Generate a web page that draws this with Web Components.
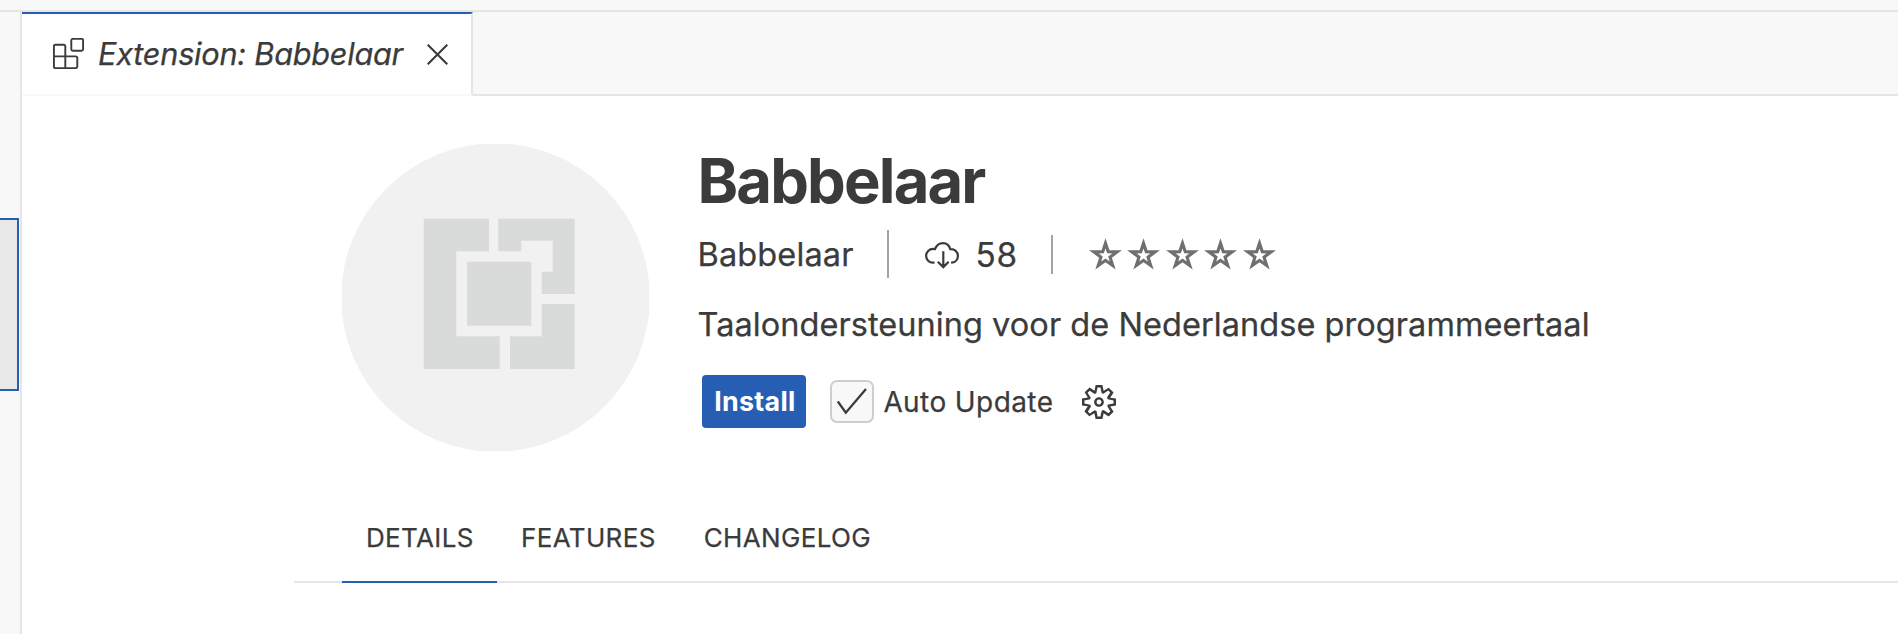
<!DOCTYPE html>
<html lang="en">
<head>
<meta charset="utf-8">
<title>Extension: Babbelaar</title>
<style>
  html, body { margin: 0; height: 100%; overflow: hidden; }
  body {
    font-family: Inter, "Liberation Sans", sans-serif;
    font-weight: 400;
    color: #3b3b3b;
    background: #fff;
    -webkit-text-stroke: .25px currentColor;
    --accent: #265eb4;
    --line: #e5e5e5;
    --panel: #f8f8f8;
  }
</style>
</head>
<body>
<ext-workbench>
  <ext-sidebar slot="side"></ext-sidebar>
  <ext-tabbar slot="bar" label="Extension: Babbelaar"></ext-tabbar>
  <ext-header>
    <ext-logo slot="logo"></ext-logo>
    <span slot="name">Babbelaar</span>
    <ext-meta slot="meta" publisher="Babbelaar" installs="58"></ext-meta>
    <span slot="description">Taalondersteuning voor de Nederlandse programmeertaal</span>
    <ext-actions slot="actions"></ext-actions>
  </ext-header>
  <ext-nav>
    <ext-nav-item active>DETAILS</ext-nav-item>
    <ext-nav-item>FEATURES</ext-nav-item>
    <ext-nav-item>CHANGELOG</ext-nav-item>
  </ext-nav>
</ext-workbench>
<script>
function define(name, html) {
  customElements.define(name, class extends HTMLElement {
    connectedCallback() {
      if (this.shadowRoot) return;
      const root = this.attachShadow({ mode: 'open' });
      root.innerHTML = html;
      root.querySelectorAll('[data-attr]').forEach(el => {
        el.textContent = this.getAttribute(el.dataset.attr) || '';
      });
    }
  });
}

customElements.define('ext-star', class extends HTMLElement {
  connectedCallback() {
    if (this.shadowRoot) return;
    const ring = (R, r) => Array.from({ length: 10 }, (_, i) => {
      const a = Math.PI * (i / 5 - .5), q = i % 2 ? r : R;
      return (16.5 + q * Math.cos(a)).toFixed(2) + ' ' + (17.6 + q * Math.sin(a)).toFixed(2);
    }).join('L');
    this.attachShadow({ mode: 'open' }).innerHTML = `
      <style>:host { display: block; width: 33px; height: 33px; } svg { display: block; }</style>
      <svg width="33" height="33" viewBox="0 0 33 33"><path fill="#6f6f6f" fill-rule="evenodd" d="M${ring(17.3, 6.7)}ZM${ring(7.2, 2.9)}Z"/></svg>`;
  }
});

define('ext-workbench', `
  <style>
    :host { display: grid; grid-template-rows: 10px 1fr; height: 634px; background: var(--panel); }
    .body { display: grid; grid-template-columns: 20px 1fr; border-top: 2px solid var(--line); min-height: 0; }
    main { display: flex; flex-direction: column; background: #fff; border-left: 2px solid var(--line); min-width: 0; }
  </style>
  <div class="title"></div>
  <div class="body">
    <slot name="side"></slot>
    <main><slot name="bar"></slot><slot></slot></main>
  </div>`);

define('ext-sidebar', `
  <style>
    :host { display: block; background: var(--panel); padding-top: 206px; }
    div { box-sizing: border-box; width: 19px; height: 173px; background: #e8e8e8; border: 2px solid var(--accent); border-left: 0; }
  </style>
  <div></div>`);

define('ext-tabbar', `
  <style>
    :host { display: flex; height: 84px; }
    .tab { box-sizing: border-box; display: flex; align-items: center; width: 451px; height: 84px; padding: 0 23px 0 31px;
      background: #fff; border-top: 2px solid var(--accent); border-bottom: 2px solid #f9f9f9; border-right: 2px solid var(--line); }
    .label { flex: 1; margin-left: 14px; font-size: 30.7px; font-style: italic; line-height: 40px; letter-spacing: -.25px; white-space: nowrap; }
    .rest { flex: 1; box-sizing: border-box; background: var(--panel); border-bottom: 2px solid var(--line); }
    svg { fill: none; stroke: currentColor; display: block; }
  </style>
  <div class="tab">
    <svg width="31" height="31" viewBox="0 0 31 31" stroke-width="1.9" style="margin-top:-1px">
      <path d="M12.3 18.4V8.2a1.5 1.5 0 0 0-1.5-1.5H2.4A1.5 1.5 0 0 0 .9 8.2v20.4a1.5 1.5 0 0 0 1.5 1.5h20.4a1.5 1.5 0 0 0 1.5-1.5V19.9a1.5 1.5 0 0 0-1.5-1.5H.9M12.3 18.4V30.1"/>
      <rect x="18.3" y=".9" width="11.8" height="11.8" rx="1.5"/>
    </svg>
    <span class="label" data-attr="label"></span>
    <svg width="21" height="21" viewBox="0 0 21 21" stroke-width="2.1"><path d="M.7.7l19.6 19.6M20.3.7.7 20.3"/></svg>
  </div>
  <div class="rest"></div>`);

define('ext-header', `
  <style>
    :host { display: flex; padding: 48px 0 0 320px; height: 307px; }
    .info { display: flex; flex-direction: column; margin-left: 48.5px; white-space: nowrap; }
    .name { font-size: 61.5px; font-weight: 700; line-height: 73px; letter-spacing: -1.85px; -webkit-text-stroke: 0; }
    .meta { margin-top: 13px; height: 48px; }
    .desc { margin-top: 26px; font-size: 32.5px; line-height: 41px; height: 40px; letter-spacing: .05px; }
    .actions { margin-top: 31px; height: 53px; }
  </style>
  <slot name="logo"></slot>
  <div class="info">
    <div class="name"><slot name="name"></slot></div>
    <div class="meta"><slot name="meta"></slot></div>
    <div class="desc"><slot name="description"></slot></div>
    <div class="actions"><slot name="actions"></slot></div>
  </div>`);

define('ext-logo', `
  <style>:host { display: block; width: 307px; height: 307px; } svg { display: block; }</style>
  <svg width="307" height="307" viewBox="0 0 307 307">
    <circle cx="153.5" cy="153.5" r="154.3" fill="#f1f1f1"/>
    <path fill="#d9dbda" d="M81.7 74.7H147v32.6h-32.7v85h43.4V225h-76zM156.3 74.7h76.4V150h-33v-22.3h11V96.7h-31.4v10.6h-23zM199.7 160h33v65H168v-32.7h31.7zM125 117.7h64.3v64H125z"/>
  </svg>`);

define('ext-meta', `
  <style>
    :host { display: flex; align-items: center; height: 48px; font-size: 32.5px; line-height: 40px; }
    .pub { width: 189.5px; letter-spacing: .14px; padding-top: 1px; }
    .bar { width: 2px; background: #a3a3a3; }
    .count { width: 75.5px; margin-left: 16.5px; font-size: 33.3px; letter-spacing: .8px; padding-top: 1px; }
    .stars { display: flex; gap: 5.4px; margin-left: 36px; }
    svg { display: block; }
  </style>
  <span class="pub" data-attr="publisher"></span>
  <span class="bar" style="height:48px"></span>
  <svg width="34" height="27" viewBox="0 0 34 27" fill="none" stroke="currentColor" stroke-width="2.2" style="margin:2px 0 0 36px">
    <path d="M9.5 20.7H8A6.9 6.9 0 0 1 8 6.9q1 0 2 .2C11.5 3.3 14.3 1.1 17.8 1.1s6.5 2.3 7.5 6.1c4.3-.2 7.6 2.6 7.6 6.7 0 3.8-2.7 6.7-6.8 6.8M18.3 9.3v15.5M12.8 19.8l5.5 5.3 5.4-5.3"/>
  </svg>
  <span class="count" data-attr="installs"></span>
  <span class="bar" style="height:39px"></span>
  <div class="stars">${'<ext-star></ext-star>'.repeat(5)}</div>`);

define('ext-actions', `
  <style>
    :host { display: flex; align-items: center; height: 53px; margin-left: 4.5px; }
    .install { box-sizing: border-box; width: 104px; height: 53px; padding-left: 12.2px; border-radius: 4px; background: var(--accent);
      color: #fff; font-size: 26.8px; font-weight: 700; line-height: 53px; letter-spacing: .3px; -webkit-text-stroke: 0; }
    .check { box-sizing: border-box; width: 44px; height: 43px; margin-left: 24px; border: 2px solid #cecece; border-radius: 7px; background: var(--panel); }
    .check svg { margin: -2px; }
    .auto { width: 198.6px; margin-left: 9.4px; font-size: 28px; line-height: 40px; letter-spacing: .41px; }
    svg { display: block; }
  </style>
  <div class="install">Install</div>
  <div class="check"><svg width="44" height="43" viewBox="0 0 44 43" fill="none" stroke="currentColor" stroke-width="2.3"><path d="M7.8 21.5l8 11.2L36 9"/></svg></div>
  <span class="auto">Auto Update</span>
  <svg width="34" height="34" viewBox="1 1 14 14" fill="currentColor" fill-rule="evenodd"><path d="M9.1 4.4L8.6 2H7.4l-.5 2.4-.7.3-2-1.3-.9.8 1.3 2-.2.7-2.4.5v1.2l2.4.5.3.8-1.3 2 .8.8 2-1.3.8.3.4 2.3h1.2l.5-2.4.8-.3 2 1.3.8-.8-1.3-2 .3-.8 2.3-.4V7.4l-2.4-.5-.3-.8 1.3-2-.8-.8-2 1.3-.7-.2zM9.4 1l.5 2.4L12 2.1l2 2-1.4 2.1 2.4.4v2.8l-2.4.5L14 12l-2 2-2.1-1.4-.5 2.4H6.6l-.5-2.4L4 13.9l-2-2 1.4-2.1L1 9.4V6.6l2.4-.5L2.1 4l2-2 2.1 1.4.4-2.4h2.8zm.6 7c0 1.1-.9 2-2 2s-2-.9-2-2 .9-2 2-2 2 .9 2 2zM8 9c.6 0 1-.4 1-1s-.4-1-1-1-1 .4-1 1 .4 1 1 1z"/></svg>`);

define('ext-nav', `
  <style>
    :host { display: flex; height: 87px; margin: 45px 0 0 272px; padding-left: 48px; box-shadow: inset 0 -2px var(--line); }
  </style>
  <slot></slot>`);

define('ext-nav-item', `
  <style>
    :host { display: block; box-sizing: border-box; height: 87px; padding: 0 24px; font-size: 26px; line-height: 83px; letter-spacing: .35px; }
    :host([active]) { width: 155px; padding-right: 0; box-shadow: inset 0 -2px var(--accent); }
  </style>
  <slot></slot>`);
</script>
</body>
</html>
